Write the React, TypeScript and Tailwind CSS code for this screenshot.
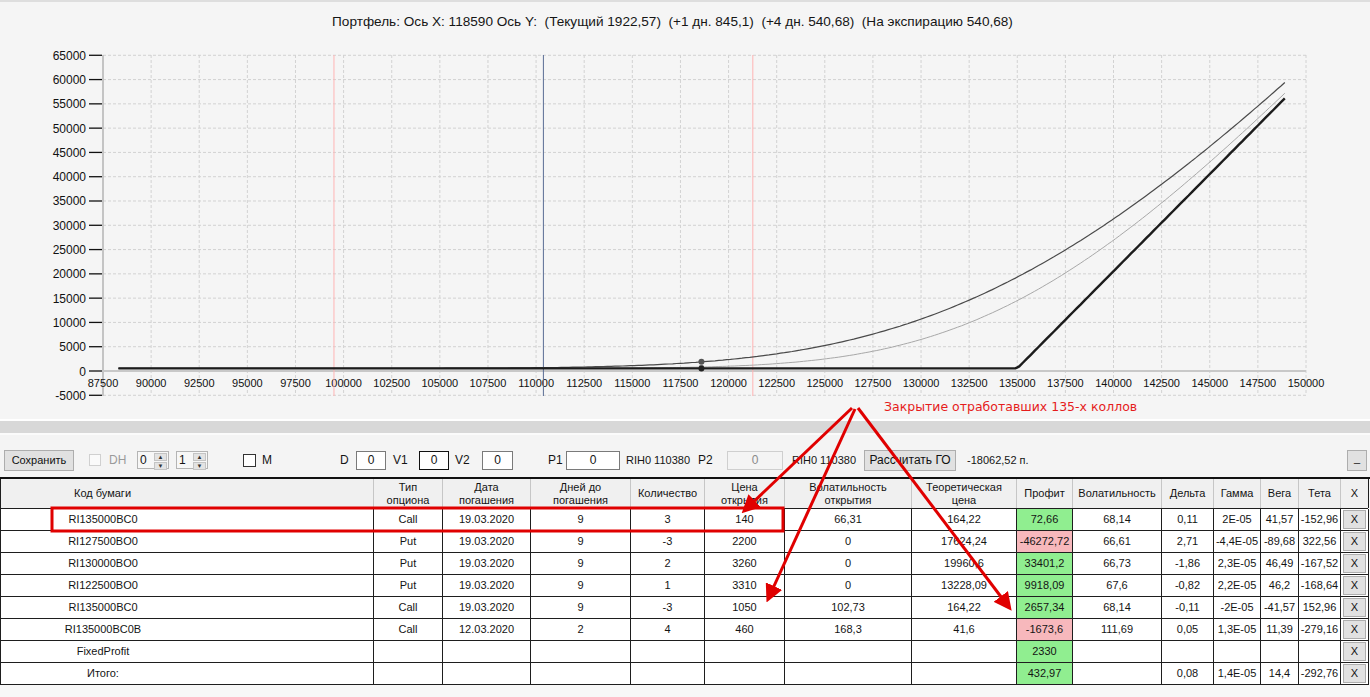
import React from 'react';

// --- chart math ---
const erf = (x: number) => {
  const t = 1 / (1 + 0.3275911 * Math.abs(x));
  const y =
    1 -
    ((((1.061405429 * t - 1.453152027) * t + 1.421413741) * t - 0.284496736) * t + 0.254829592) *
      t *
      Math.exp(-x * x);
  return x >= 0 ? y : -y;
};
const cdf = (x: number) => 0.5 * (1 + erf(x / Math.SQRT2));
const bsCall = (s: number, k: number, v: number) => {
  const d1 = Math.log(s / k) / v + v / 2;
  return s * cdf(d1) - k * cdf(d1 - v);
};

const X = (s: number) => 103 + ((s - 87500) / 2500) * 48.12;
const Y = (v: number) => 371 - (v / 5000) * 24.286;

const expiry = (s: number) => 540 + 4 * Math.max(s - 135000, 0);
const current = (s: number) => 540 + 4 * bsCall(s, 135000, 0.0873);
const plusDay = (s: number) => 540 + 4 * bsCall(s, 135000, 0.0648);

const buildPath = (fn: (s: number) => number) => {
  const pts: string[] = [];
  for (let s = 88300; s <= 148900; s += 200) {
    pts.push(`${X(s).toFixed(1)},${Y(fn(s)).toFixed(1)}`);
  }
  return 'M' + pts.join(' L');
};

const xTicks = Array.from({ length: 26 }, (_, i) => 87500 + i * 2500);
const yTicks = Array.from({ length: 15 }, (_, i) => 65000 - i * 5000);

const Chart = () => (
  <svg width={1370} height={375} viewBox="0 44 1370 375" className="block">
    {/* grid */}
    {xTicks.slice(1).map((s) => (
      <line key={'gx' + s} x1={X(s)} x2={X(s)} y1={55} y2={395} stroke="#d2d2d2" strokeDasharray="3 2" />
    ))}
    {yTicks.map((v) => (
      <line key={'gy' + v} x1={103} x2={X(150000)} y1={Y(v)} y2={Y(v)} stroke="#d2d2d2" strokeDasharray="3 2" />
    ))}
    {/* axes */}
    <line x1={103} x2={103} y1={55} y2={396} stroke="#c4c4c4" strokeWidth={2} />
    <line x1={103} x2={X(150000)} y1={371} y2={371} stroke="#c8c8c8" strokeWidth={2} />
    {yTicks.map((v) => (
      <g key={'yl' + v}>
        <line x1={89} x2={102} y1={Y(v)} y2={Y(v)} stroke="#111" strokeWidth={1.3} />
        <text x={86} y={Y(v) + 4.5} textAnchor="end" fontSize={12} fill="#111" fontFamily="Liberation Sans, Arial, sans-serif">
          {v}
        </text>
      </g>
    ))}
    {xTicks.map((s) => (
      <text key={'xl' + s} x={X(s)} y={387} textAnchor="middle" fontSize={11} fill="#111" fontFamily="Liberation Sans, Arial, sans-serif">
        {s}
      </text>
    ))}
    {/* markers */}
    <line x1={X(99500)} x2={X(99500)} y1={55} y2={396} stroke="#ffb4b4" />
    <line x1={X(121260)} x2={X(121260)} y1={55} y2={396} stroke="#ffb4b4" />
    <line x1={X(110380)} x2={X(110380)} y1={55} y2={396} stroke="#5a6d94" />
    {/* curves */}
    <path d={buildPath(plusDay)} fill="none" stroke="#a8a8a8" strokeWidth={1} />
    <path d={buildPath(current)} fill="none" stroke="#4a4a4a" strokeWidth={1.2} />
    <path d={buildPath(expiry)} fill="none" stroke="#1c1c1c" strokeWidth={2.4} />
    <circle cx={X(118590)} cy={Y(1922)} r={3} fill="#555" />
    <circle cx={X(118590)} cy={Y(845)} r={2.5} fill="#888" />
    <circle cx={X(118590)} cy={Y(540)} r={3} fill="#222" />
  </svg>
);

// --- table ---
type Row = {
  code: string;
  type?: string;
  date?: string;
  days?: string;
  qty?: string;
  price?: string;
  vol0?: string;
  theo?: string;
  profit: string;
  neg?: boolean;
  vol?: string;
  delta?: string;
  gamma?: string;
  vega?: string;
  theta?: string;
};

const rows: Row[] = [
  { code: 'RI135000BC0', type: 'Call', date: '19.03.2020', days: '9', qty: '3', price: '140', vol0: '66,31', theo: '164,22', profit: '72,66', vol: '68,14', delta: '0,11', gamma: '2E-05', vega: '41,57', theta: '-152,96' },
  { code: 'RI127500BO0', type: 'Put', date: '19.03.2020', days: '9', qty: '-3', price: '2200', vol0: '0', theo: '17624,24', profit: '-46272,72', neg: true, vol: '66,61', delta: '2,71', gamma: '-4,4E-05', vega: '-89,68', theta: '322,56' },
  { code: 'RI130000BO0', type: 'Put', date: '19.03.2020', days: '9', qty: '2', price: '3260', vol0: '0', theo: '19960,6', profit: '33401,2', vol: '66,73', delta: '-1,86', gamma: '2,3E-05', vega: '46,49', theta: '-167,52' },
  { code: 'RI122500BO0', type: 'Put', date: '19.03.2020', days: '9', qty: '1', price: '3310', vol0: '0', theo: '13228,09', profit: '9918,09', vol: '67,6', delta: '-0,82', gamma: '2,2E-05', vega: '46,2', theta: '-168,64' },
  { code: 'RI135000BC0', type: 'Call', date: '19.03.2020', days: '9', qty: '-3', price: '1050', vol0: '102,73', theo: '164,22', profit: '2657,34', vol: '68,14', delta: '-0,11', gamma: '-2E-05', vega: '-41,57', theta: '152,96' },
  { code: 'RI135000BC0B', type: 'Call', date: '12.03.2020', days: '2', qty: '4', price: '460', vol0: '168,3', theo: '41,6', profit: '-1673,6', neg: true, vol: '111,69', delta: '0,05', gamma: '1,3E-05', vega: '11,39', theta: '-279,16' },
  { code: 'FixedProfit', profit: '2330' },
  { code: 'Итого:', profit: '432,97', delta: '0,08', gamma: '1,4E-05', vega: '14,4', theta: '-292,76' },
];

const headers: React.ReactNode[] = [
  'Код бумаги',
  <>Тип<br />опциона</>,
  <>Дата<br />погашения</>,
  <>Дней до<br />погашения</>,
  'Количество',
  <>Цена<br />открытия</>,
  <>Волатильность<br />открытия</>,
  <>Теоретическая<br />цена</>,
  'Профит',
  'Волатильность',
  'Дельта',
  'Гамма',
  'Вега',
  'Тета',
  'X',
];

const gridCols =
  'grid grid-cols-[373px_69px_88px_100px_74px_80px_127px_105px_56px_89px_52px_47px_38px_42px_28px]';

const Cell = ({ children, className = '' }: { children?: React.ReactNode; className?: string }) => (
  <div className={`h-[22px] flex items-center justify-center border-r border-b border-[#1e1e1e] whitespace-nowrap ${className}`}>
    {children}
  </div>
);

const SmallBtn = ({ children, className = '' }: { children: React.ReactNode; className?: string }) => (
  <div className={`flex items-center justify-center bg-[#e1e1e1] border border-[#adadad] text-[#111] ${className}`}>{children}</div>
);

const Spinner = ({ value }: { value: string }) => (
  <div className="w-[32px] h-[18px] flex border border-[#b4b4b4] bg-[#f7f7f7] shrink-0">
    <span className="flex-1 pl-[2px] leading-[16px] text-[12px]">{value}</span>
    <div className="w-[13px] my-[1px] mr-[1px] flex flex-col gap-[1px]">
      <div className="flex-1 bg-[#e3e3e3] border border-[#c4c4c4] flex items-center justify-center text-[6px] leading-none text-[#333]">▲</div>
      <div className="flex-1 bg-[#e3e3e3] border border-[#c4c4c4] flex items-center justify-center text-[6px] leading-none text-[#333]">▼</div>
    </div>
  </div>
);

const Field = ({ w, value, focus, disabled }: { w: string; value: string; focus?: boolean; disabled?: boolean }) => (
  <div
    className={`${w} h-[19px] shrink-0 flex items-center justify-center border text-[12px] ${
      focus ? 'border-[#111] bg-white' : disabled ? 'border-[#cfcfcf] bg-[#f4f4f4] text-[#8a8a8a]' : 'border-[#7a7a7a] bg-white'
    }`}
  >
    {value}
  </div>
);

export default function App() {
  return (
    <div className="relative w-[1370px] h-[697px] overflow-hidden bg-[#f4f4f4] text-[#141414] text-[12px] font-['Liberation_Sans',Arial,sans-serif]">
      {/* chart panel */}
      <div className="h-[419px] border-t-2 border-[#dedede] bg-[#f5f5f5]">
        <div className="h-[42px] flex items-center justify-center pb-[1px] pr-[25px] text-[13.6px] text-[#161616] whitespace-pre">
          Портфель: Ось X: 118590 Ось Y:  (Текущий 1922,57)  (+1 дн. 845,1)  (+4 дн. 540,68)  (На экспирацию 540,68)
        </div>
        <Chart />
      </div>

      {/* splitter */}
      <div className="h-[2px] bg-white" />
      <div className="h-[12px] bg-[#d8d8d8]" />
      <div className="h-[2px] bg-[#fbfbfb]" />

      {/* toolbar */}
      <div className="h-[42px] pt-[8px] flex items-center pl-[4px] text-[11px]">
        <SmallBtn className="w-[70px] h-[21px] shrink-0">Сохранить</SmallBtn>
        <div className="ml-[15px] w-[12px] h-[12px] border border-[#d0d0d0] bg-[#fafafa] shrink-0" />
        <span className="ml-[8px] w-[28px] text-[#9a9a9a] text-[12px] shrink-0">DH</span>
        <Spinner value="0" />
        <div className="w-[7px] shrink-0" />
        <Spinner value="1" />
        <div className="ml-[35px] w-[13px] h-[13px] border border-[#333] bg-white shrink-0" />
        <span className="ml-[6px] w-[78px] text-[12px] shrink-0">M</span>
        <span className="w-[16px] text-[12px] shrink-0">D</span>
        <Field w="w-[30px]" value="0" />
        <span className="w-[33px] pl-[7px] text-[12px] shrink-0">V1</span>
        <Field w="w-[30px]" value="0" focus />
        <span className="w-[33px] pl-[6px] text-[12px] shrink-0">V2</span>
        <Field w="w-[31px]" value="0" />
        <span className="w-[53px] pl-[35px] text-[12px] shrink-0">P1</span>
        <Field w="w-[54px]" value="0" />
        <span className="w-[78px] pl-[6px] shrink-0 whitespace-nowrap">RIH0 110380</span>
        <span className="w-[29px] text-[12px] shrink-0">P2</span>
        <Field w="w-[56px]" value="0" disabled />
        <span className="w-[81px] pl-[9px] shrink-0 whitespace-nowrap">RIH0 110380</span>
        <SmallBtn className="w-[92px] h-[21px] shrink-0 text-[12px]">Рассчитать ГО</SmallBtn>
        <span className="pl-[11px] whitespace-nowrap">-18062,52 п.</span>
        <SmallBtn className="ml-auto mr-[3px] w-[20px] h-[21px] shrink-0 items-end pb-[3px]">_</SmallBtn>
      </div>

      {/* table */}
      <div className="h-[220px] border-t-2 border-[#111] bg-[#f7f7f7] text-[11px]">
        <div className={`${gridCols} h-[30px] bg-[#f0f0f0] border-b border-[#1e1e1e] border-l border-l-[#1e1e1e] w-[1368px]`}>
          {headers.map((h, i) => (
            <div
              key={i}
              className={`flex items-center text-center leading-[13px] border-r ${
                i === 14 ? 'border-[#1e1e1e]' : 'border-[#c6c6c6]'
              } ${i === 0 ? 'justify-start pl-[73px]' : 'justify-center'}`}
            >
              {h}
            </div>
          ))}
        </div>
        {rows.map((r, ri) => (
          <div key={ri} className={`${gridCols} bg-white w-[1368px] border-l border-[#1e1e1e]`}>
            <Cell className="justify-start">
              <span className="w-[204px] text-center">{r.code}</span>
            </Cell>
            <Cell>{r.type}</Cell>
            <Cell>{r.date}</Cell>
            <Cell>{r.days}</Cell>
            <Cell>{r.qty}</Cell>
            <Cell>{r.price}</Cell>
            <Cell>{r.vol0}</Cell>
            <Cell>{r.theo}</Cell>
            <Cell className={r.neg ? 'bg-[#f7b8bc]' : 'bg-[#90ee90]'}>{r.profit}</Cell>
            <Cell>{r.vol}</Cell>
            <Cell>{r.delta}</Cell>
            <Cell>{r.gamma}</Cell>
            <Cell>{r.vega}</Cell>
            <Cell>{r.theta}</Cell>
            <Cell>
              <SmallBtn className="w-[23px] h-[19px]">X</SmallBtn>
            </Cell>
          </div>
        ))}
      </div>

      {/* annotation overlay */}
      <div className="absolute left-[884px] top-[398px] text-[12.5px] text-[#e51c1c] font-['DejaVu_Sans',sans-serif] whitespace-nowrap">
        Закрытие отработавших 135-х коллов
      </div>
      <svg className="absolute inset-0 pointer-events-none" width={1370} height={697}>
        <defs>
          <marker id="ah" markerWidth="6" markerHeight="6" refX="4" refY="3" orient="auto" markerUnits="strokeWidth">
            <path d="M0,0 L6,3 L0,6 Z" fill="#e00000" />
          </marker>
        </defs>
        <rect x={52} y={508} width={731} height={23} fill="none" stroke="#e00000" strokeWidth={3} />
        <line x1={852} y1={408} x2={746} y2={509} stroke="#e00000" strokeWidth={3} markerEnd="url(#ah)" />
        <line x1={855} y1={409} x2={769} y2={597} stroke="#e00000" strokeWidth={3} markerEnd="url(#ah)" />
        <line x1={858} y1={408} x2={1008} y2={606} stroke="#e00000" strokeWidth={3} markerEnd="url(#ah)" />
      </svg>
    </div>
  );
}
